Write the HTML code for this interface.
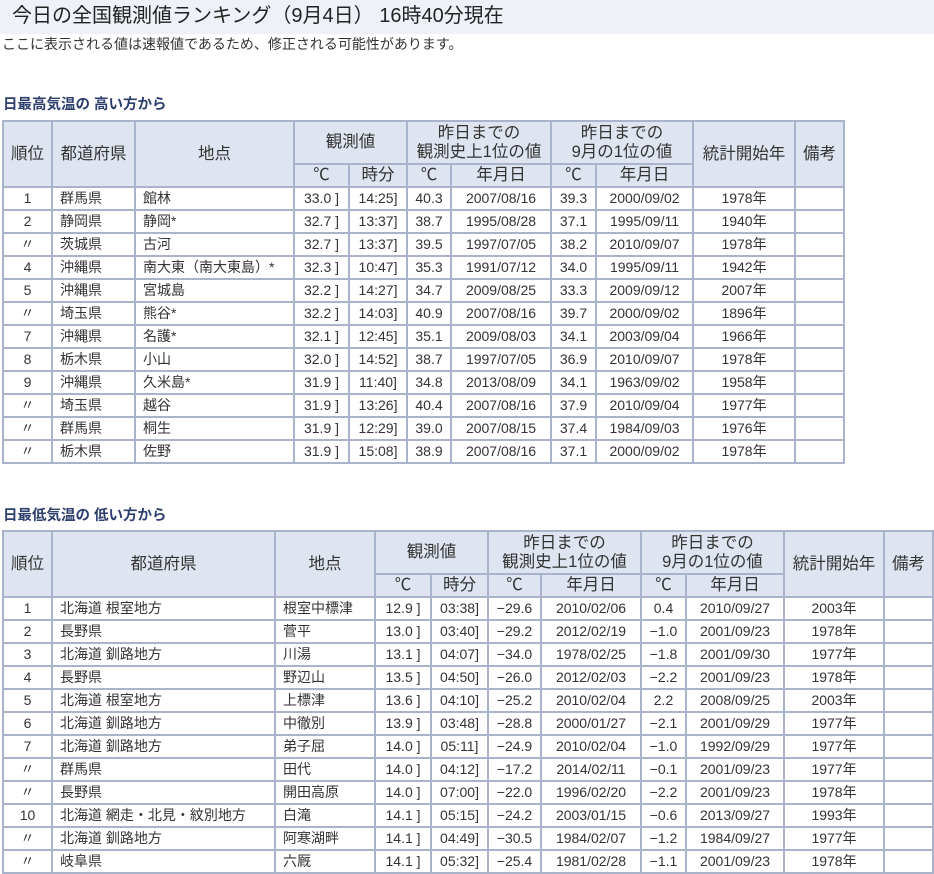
<!DOCTYPE html>
<html><head><meta charset="utf-8">
<style>
body{margin:0;background:#fff;font-family:"Liberation Sans","Noto Sans CJK JP",sans-serif;color:#333;}
.title{position:absolute;left:0;top:0;width:934px;height:34px;background:#eef2f8;font-size:20px;line-height:32px;padding-left:12px;box-sizing:border-box;color:#222;}
.sub{position:absolute;left:2px;top:34px;font-size:14px;color:#333;}
.h{position:absolute;left:3px;font-size:14.5px;font-weight:bold;color:#2d3f6e;}
table{position:absolute;left:2px;border-collapse:collapse;table-layout:fixed;font-size:14px;}
td,th{border:2px solid #a9b3cb;height:21px;padding:0 3px;text-align:center;white-space:nowrap;overflow:hidden;font-weight:normal;line-height:19px;}
th{background:#dfe5f0;font-size:16.5px;}
td.l{text-align:left;padding-left:7px;}
</style></head><body>
<div class="title">今日の全国観測値ランキング（9月4日） 16時40分現在</div>
<div class="sub">ここに表示される値は速報値であるため、修正される可能性があります。</div>
<div class="h" style="top:93px">日最高気温の 高い方から</div>
<table style="top:120px;width:841px">
<colgroup><col style="width:49px"><col style="width:83px"><col style="width:159px"><col style="width:55px"><col style="width:58px"><col style="width:44px"><col style="width:100px"><col style="width:45px"><col style="width:97px"><col style="width:102px"><col style="width:49px"></colgroup>
<tr><th rowspan="2">順位</th><th rowspan="2">都道府県</th><th rowspan="2">地点</th><th colspan="2" style="height:41px">観測値</th><th colspan="2">昨日までの<br>観測史上1位の値</th><th colspan="2">昨日までの<br>9月の1位の値</th><th rowspan="2">統計開始年</th><th rowspan="2">備考</th></tr>
<tr><th>℃</th><th>時分</th><th>℃</th><th>年月日</th><th>℃</th><th>年月日</th></tr>
<tr><td>1</td><td class="l">群馬県</td><td class="l">館林</td><td>33.0 ]</td><td>14:25]</td><td>40.3</td><td>2007/08/16</td><td>39.3</td><td>2000/09/02</td><td>1978年</td><td></td></tr>
<tr><td>2</td><td class="l">静岡県</td><td class="l">静岡*</td><td>32.7 ]</td><td>13:37]</td><td>38.7</td><td>1995/08/28</td><td>37.1</td><td>1995/09/11</td><td>1940年</td><td></td></tr>
<tr><td>〃</td><td class="l">茨城県</td><td class="l">古河</td><td>32.7 ]</td><td>13:37]</td><td>39.5</td><td>1997/07/05</td><td>38.2</td><td>2010/09/07</td><td>1978年</td><td></td></tr>
<tr><td>4</td><td class="l">沖縄県</td><td class="l">南大東（南大東島）*</td><td>32.3 ]</td><td>10:47]</td><td>35.3</td><td>1991/07/12</td><td>34.0</td><td>1995/09/11</td><td>1942年</td><td></td></tr>
<tr><td>5</td><td class="l">沖縄県</td><td class="l">宮城島</td><td>32.2 ]</td><td>14:27]</td><td>34.7</td><td>2009/08/25</td><td>33.3</td><td>2009/09/12</td><td>2007年</td><td></td></tr>
<tr><td>〃</td><td class="l">埼玉県</td><td class="l">熊谷*</td><td>32.2 ]</td><td>14:03]</td><td>40.9</td><td>2007/08/16</td><td>39.7</td><td>2000/09/02</td><td>1896年</td><td></td></tr>
<tr><td>7</td><td class="l">沖縄県</td><td class="l">名護*</td><td>32.1 ]</td><td>12:45]</td><td>35.1</td><td>2009/08/03</td><td>34.1</td><td>2003/09/04</td><td>1966年</td><td></td></tr>
<tr><td>8</td><td class="l">栃木県</td><td class="l">小山</td><td>32.0 ]</td><td>14:52]</td><td>38.7</td><td>1997/07/05</td><td>36.9</td><td>2010/09/07</td><td>1978年</td><td></td></tr>
<tr><td>9</td><td class="l">沖縄県</td><td class="l">久米島*</td><td>31.9 ]</td><td>11:40]</td><td>34.8</td><td>2013/08/09</td><td>34.1</td><td>1963/09/02</td><td>1958年</td><td></td></tr>
<tr><td>〃</td><td class="l">埼玉県</td><td class="l">越谷</td><td>31.9 ]</td><td>13:26]</td><td>40.4</td><td>2007/08/16</td><td>37.9</td><td>2010/09/04</td><td>1977年</td><td></td></tr>
<tr><td>〃</td><td class="l">群馬県</td><td class="l">桐生</td><td>31.9 ]</td><td>12:29]</td><td>39.0</td><td>2007/08/15</td><td>37.4</td><td>1984/09/03</td><td>1976年</td><td></td></tr>
<tr><td>〃</td><td class="l">栃木県</td><td class="l">佐野</td><td>31.9 ]</td><td>15:08]</td><td>38.9</td><td>2007/08/16</td><td>37.1</td><td>2000/09/02</td><td>1978年</td><td></td></tr>
</table>
<div class="h" style="top:504px">日最低気温の 低い方から</div>
<table style="top:530px;width:930px">
<colgroup><col style="width:49px"><col style="width:223px"><col style="width:100px"><col style="width:56px"><col style="width:57px"><col style="width:53px"><col style="width:100px"><col style="width:45px"><col style="width:98px"><col style="width:100px"><col style="width:49px"></colgroup>
<tr><th rowspan="2">順位</th><th rowspan="2">都道府県</th><th rowspan="2">地点</th><th colspan="2" style="height:41px">観測値</th><th colspan="2">昨日までの<br>観測史上1位の値</th><th colspan="2">昨日までの<br>9月の1位の値</th><th rowspan="2">統計開始年</th><th rowspan="2">備考</th></tr>
<tr><th>℃</th><th>時分</th><th>℃</th><th>年月日</th><th>℃</th><th>年月日</th></tr>
<tr><td>1</td><td class="l">北海道 根室地方</td><td class="l">根室中標津</td><td>12.9 ]</td><td>03:38]</td><td>−29.6</td><td>2010/02/06</td><td>0.4</td><td>2010/09/27</td><td>2003年</td><td></td></tr>
<tr><td>2</td><td class="l">長野県</td><td class="l">菅平</td><td>13.0 ]</td><td>03:40]</td><td>−29.2</td><td>2012/02/19</td><td>−1.0</td><td>2001/09/23</td><td>1978年</td><td></td></tr>
<tr><td>3</td><td class="l">北海道 釧路地方</td><td class="l">川湯</td><td>13.1 ]</td><td>04:07]</td><td>−34.0</td><td>1978/02/25</td><td>−1.8</td><td>2001/09/30</td><td>1977年</td><td></td></tr>
<tr><td>4</td><td class="l">長野県</td><td class="l">野辺山</td><td>13.5 ]</td><td>04:50]</td><td>−26.0</td><td>2012/02/03</td><td>−2.2</td><td>2001/09/23</td><td>1978年</td><td></td></tr>
<tr><td>5</td><td class="l">北海道 根室地方</td><td class="l">上標津</td><td>13.6 ]</td><td>04:10]</td><td>−25.2</td><td>2010/02/04</td><td>2.2</td><td>2008/09/25</td><td>2003年</td><td></td></tr>
<tr><td>6</td><td class="l">北海道 釧路地方</td><td class="l">中徹別</td><td>13.9 ]</td><td>03:48]</td><td>−28.8</td><td>2000/01/27</td><td>−2.1</td><td>2001/09/29</td><td>1977年</td><td></td></tr>
<tr><td>7</td><td class="l">北海道 釧路地方</td><td class="l">弟子屈</td><td>14.0 ]</td><td>05:11]</td><td>−24.9</td><td>2010/02/04</td><td>−1.0</td><td>1992/09/29</td><td>1977年</td><td></td></tr>
<tr><td>〃</td><td class="l">群馬県</td><td class="l">田代</td><td>14.0 ]</td><td>04:12]</td><td>−17.2</td><td>2014/02/11</td><td>−0.1</td><td>2001/09/23</td><td>1977年</td><td></td></tr>
<tr><td>〃</td><td class="l">長野県</td><td class="l">開田高原</td><td>14.0 ]</td><td>07:00]</td><td>−22.0</td><td>1996/02/20</td><td>−2.2</td><td>2001/09/23</td><td>1978年</td><td></td></tr>
<tr><td>10</td><td class="l">北海道 網走・北見・紋別地方</td><td class="l">白滝</td><td>14.1 ]</td><td>05:15]</td><td>−24.2</td><td>2003/01/15</td><td>−0.6</td><td>2013/09/27</td><td>1993年</td><td></td></tr>
<tr><td>〃</td><td class="l">北海道 釧路地方</td><td class="l">阿寒湖畔</td><td>14.1 ]</td><td>04:49]</td><td>−30.5</td><td>1984/02/07</td><td>−1.2</td><td>1984/09/27</td><td>1977年</td><td></td></tr>
<tr><td>〃</td><td class="l">岐阜県</td><td class="l">六厩</td><td>14.1 ]</td><td>05:32]</td><td>−25.4</td><td>1981/02/28</td><td>−1.1</td><td>2001/09/23</td><td>1978年</td><td></td></tr>
</table>
</body></html>
